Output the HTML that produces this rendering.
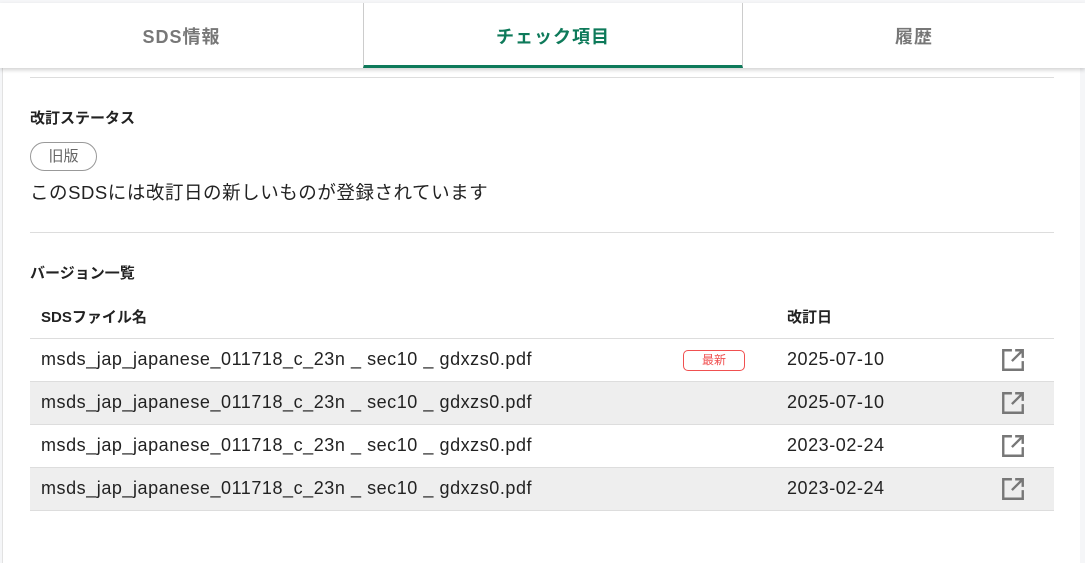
<!DOCTYPE html>
<html><head><meta charset="utf-8"><style>
*{margin:0;padding:0;box-sizing:border-box}
body{width:1085px;height:545px;background:#f5f6f8;font-family:"Liberation Sans","Noto Sans CJK JP",sans-serif;color:#222;position:relative;overflow:hidden}
.panel{position:absolute;left:2px;top:3px;width:1078px;height:560px;background:#fff;border-left:1px solid #e2e2e2}
.tabs{position:absolute;left:0;top:3px;width:1085px;height:65px;background:#fff;box-shadow:0 2px 4px rgba(0,0,0,.18);display:flex;z-index:2}
.tab{height:65px;display:flex;align-items:center;justify-content:center;font-size:18px;color:#777;letter-spacing:1px;font-weight:bold}
.t1{width:363px}.t2{width:380px;border-left:1px solid #ccc;border-right:1px solid #ccc;color:#0e7a5a;border-bottom:3px solid #0e7a5a;padding-top:3px}.t3{flex:1}
.hr{position:absolute;left:30px;width:1024px;height:1px;background:#ddd}
.h{position:absolute;left:30px;font-size:15px;font-weight:bold}
.pill{position:absolute;left:30px;top:142px;width:67px;height:29px;border:1px solid #999;border-radius:15px;font-size:15px;color:#666;text-align:center;line-height:27px}
.txt{position:absolute;left:30px;top:179px;font-size:18.5px;letter-spacing:0.55px}
table{position:absolute;left:30px;top:295px;width:1024px;border-collapse:collapse;table-layout:fixed}
th{height:43px;text-align:left;font-size:15px;font-weight:bold;border-bottom:1px solid #ddd}
td{height:43px;font-size:18px;letter-spacing:0.55px;border-bottom:1px solid #ddd;white-space:nowrap}
tr.g td{background:#eee}
.c1{padding-left:11px;width:653px}.c2{width:104px}.c3{width:200px}
.badge{display:inline-block;width:62px;height:21px;border:1px solid #f05050;border-radius:5px;color:#f05050;font-size:12px;letter-spacing:0;text-align:center;line-height:19px}
</style></head><body>
<div class="panel"></div>
<div class="tabs"><div class="tab t1">SDS情報</div><div class="tab t2">チェック項目</div><div class="tab t3">履歴</div></div>
<div class="hr" style="top:77px"></div>
<div class="h" style="top:107px">改訂ステータス</div>
<div class="pill">旧版</div>
<div class="txt">このSDSには改訂日の新しいものが登録されています</div>
<div class="hr" style="top:232px"></div>
<div class="h" style="top:262px">バージョン一覧</div>
<table>
<tr><th class="c1">SDSファイル名</th><th class="c2"></th><th class="c3">改訂日</th><th></th></tr>
<tr><td class="c1">msds_jap_japanese_011718_c_23n _ sec10 _ gdxzs0.pdf</td><td><span class="badge">最新</span></td><td>2025-07-10</td><td>ICON</td></tr>
<tr class="g"><td class="c1">msds_jap_japanese_011718_c_23n _ sec10 _ gdxzs0.pdf</td><td></td><td>2025-07-10</td><td>ICON</td></tr>
<tr><td class="c1">msds_jap_japanese_011718_c_23n _ sec10 _ gdxzs0.pdf</td><td></td><td>2023-02-24</td><td>ICON</td></tr>
<tr class="g"><td class="c1">msds_jap_japanese_011718_c_23n _ sec10 _ gdxzs0.pdf</td><td></td><td>2023-02-24</td><td>ICON</td></tr>
</table>
<script>
document.querySelectorAll('td').forEach(function(t){if(t.textContent==='ICON'){t.innerHTML='<svg width="26" height="26" viewBox="0 0 24 24" style="margin-left:13px;display:block"><path d="M11 3H3v18h18v-8M14 3h7v7M21 3L11 13" fill="none" stroke="#777" stroke-width="2.2"/></svg>';}});
</script>
</body></html>
